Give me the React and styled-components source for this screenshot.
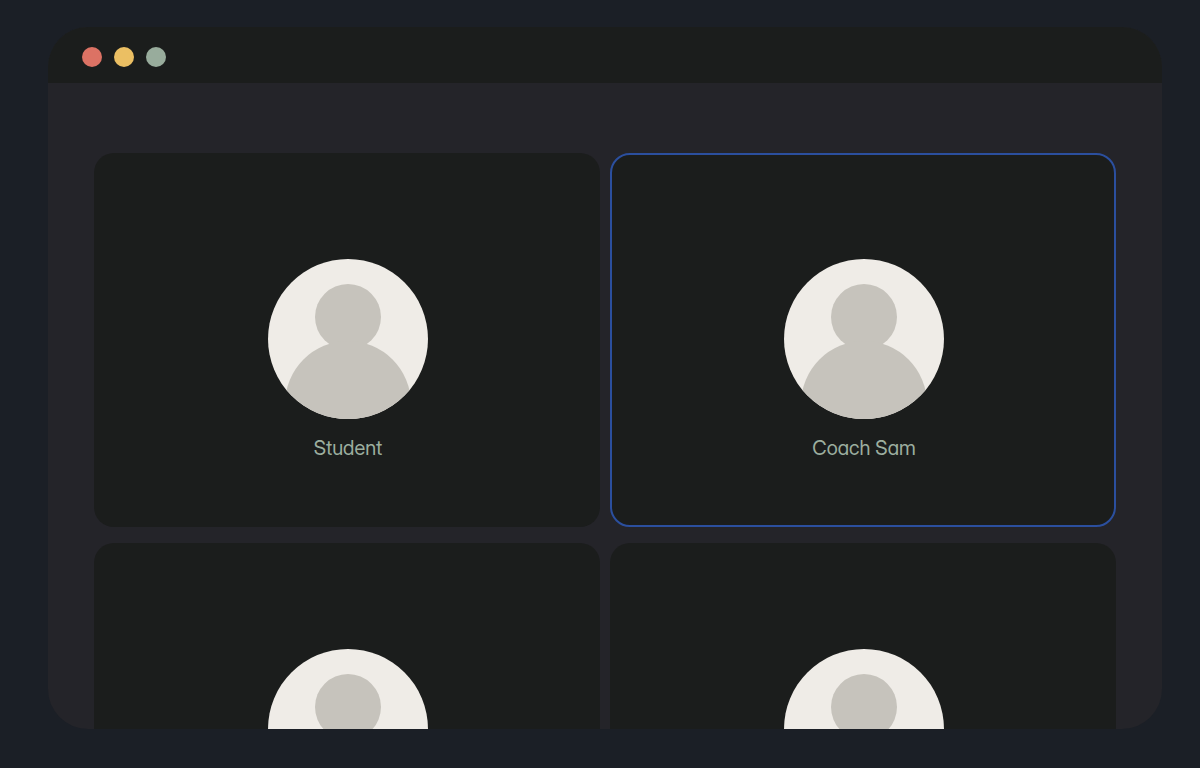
import React from 'react'
import styled, {createGlobalStyle} from 'styled-components'

const participants = [
  {id: 1, name: 'Student'},
  {id: 2, name: 'Coach Sam', speaking: true},
  {id: 3},
  {id: 4},
]

const App = () => {
  return (
    <>
      <GlobalStyle />
      <Page>
        <Window>
          <TitleBar>
            <Dot $color='#dc7264' />
            <Dot $color='#ebbf63' />
            <Dot $color='#98ac9c' />
          </TitleBar>
          <Grid>
            {participants.map((p) => (
              <Tile key={p.id} $speaking={p.speaking}>
                <Avatar viewBox='0 0 160 160' aria-hidden='true'>
                  <circle cx='80' cy='58' r='33' />
                  <circle cx='80' cy='145' r='63' />
                </Avatar>
                {p.name && <Name>{p.name}</Name>}
              </Tile>
            ))}
          </Grid>
        </Window>
      </Page>
    </>
  )
}

const GlobalStyle = createGlobalStyle`
  * {
    box-sizing: border-box;
  }

  body {
    margin: 0;
    background-color: #1b1f26;
    font-family: 'Inter Display', Inter, 'Liberation Sans', sans-serif;
    font-feature-settings: 'cv11';
  }
`

const Page = styled.main`
  display: flex;
  height: 100vh;
  padding: 27px 38px 39px 48px;
`

const Window = styled.section`
  flex: 1;
  display: flex;
  flex-direction: column;
  border-radius: 40px;
  background-color: #242429;
  overflow: hidden;
`

const TitleBar = styled.header`
  display: flex;
  flex-shrink: 0;
  gap: 12px;
  padding: 20px 34px 16px;
  background-color: #1b1d1c;
`

const Dot = styled.span`
  width: 20px;
  height: 20px;
  border-radius: 50%;
  background-color: ${(props) => props.$color};
`

const Grid = styled.div`
  display: grid;
  grid-template-columns: 1fr 1fr;
  gap: 16px 10px;
  padding: 70px 46px;
`

const Tile = styled.article`
  display: flex;
  flex-direction: column;
  align-items: center;
  gap: 17px;
  height: 374px;
  padding: 104px 0 0 2px;
  border: 2px solid ${(props) => (props.$speaking ? '#2b4f9e' : 'transparent')};
  border-radius: 20px;
  background-color: #1b1d1c;
`

const Avatar = styled.svg`
  width: 160px;
  height: 160px;
  border-radius: 50%;
  background-color: #efece7;
  fill: #c6c3bc;
`

const Name = styled.p`
  margin: 0;
  color: #9cae9f;
  font-size: 20px;
  font-weight: 400;
  line-height: 24px;
`

export default App
